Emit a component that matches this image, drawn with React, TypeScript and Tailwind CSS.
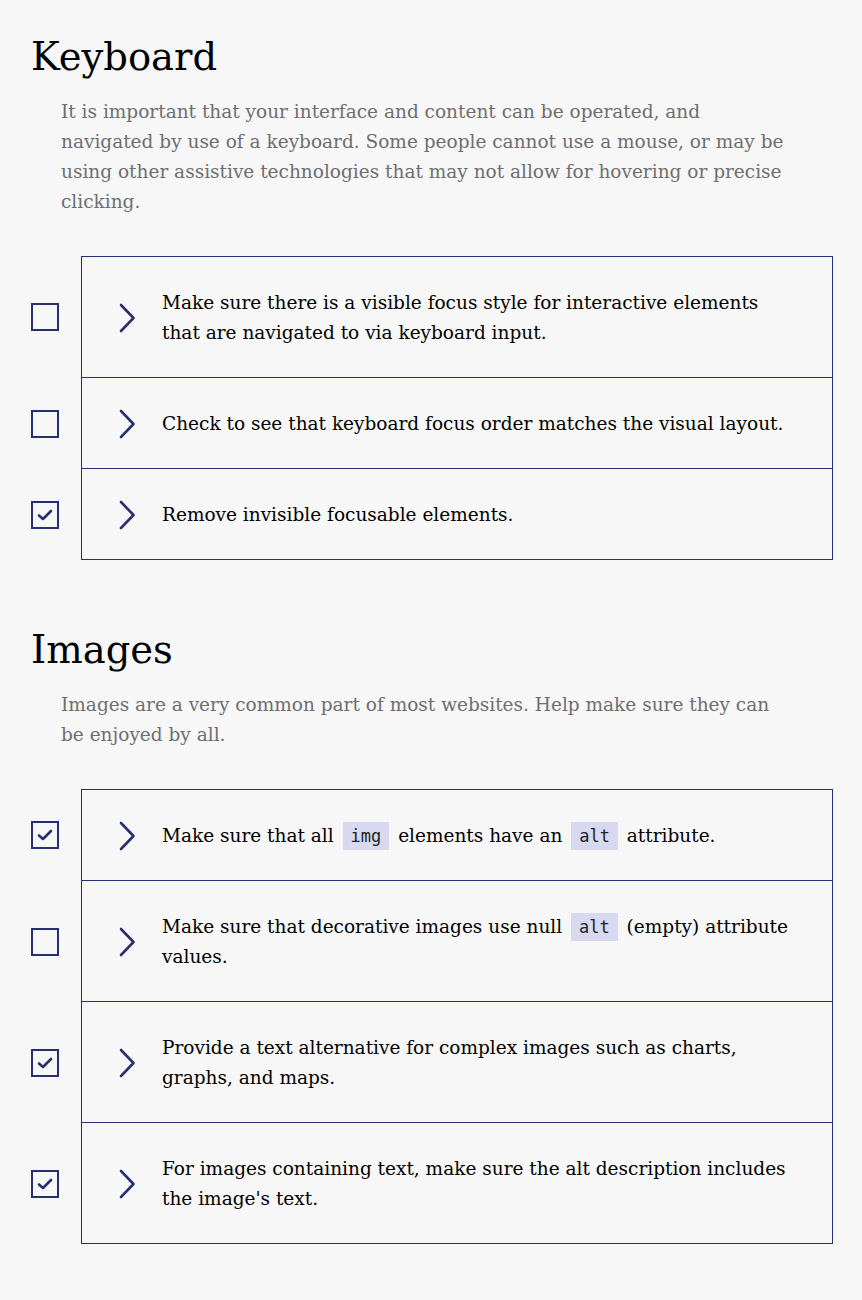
import React from "react";

type Item = { checked: boolean; content: React.ReactNode };

function Code({ children }: { children: React.ReactNode }) {
  return (
    <code className="mx-[3px] bg-[#d8d9f1] px-[8px] py-[4px] font-['DejaVu_Sans_Mono',monospace] text-[17px] text-[#222]">
      {children}
    </code>
  );
}

function Checkbox({ checked }: { checked: boolean }) {
  return (
    <div className="flex h-[28px] w-[28px] shrink-0 items-center justify-center border-2 border-[#27306e]">
      {checked && (
        <svg width="16" height="12" viewBox="0 0 16 12" fill="none">
          <path d="M2 6.5 L6 10 L14 2" stroke="#27306e" strokeWidth="2.6" strokeLinecap="round" strokeLinejoin="round" />
        </svg>
      )}
    </div>
  );
}

function Chevron() {
  return (
    <svg width="18" height="30" viewBox="0 0 18 30" fill="none" className="shrink-0">
      <path d="M3 2 L15.5 15 L3 28" stroke="#27306e" strokeWidth="2.6" strokeLinecap="round" strokeLinejoin="round" />
    </svg>
  );
}

function Section({ title, description, items }: { title: string; description: string; items: Item[] }) {
  return (
    <section className="mb-[66px]">
      <h2 className="text-[38.5px] leading-[48px] text-black">{title}</h2>
      <p className="mt-[16px] pl-[30px] pr-[40px] text-[18.5px] leading-[30px] text-[#6e6e6e]">{description}</p>
      <ul className="mt-[39px]">
        {items.map((item, i) => (
          <li key={i} className="flex items-center">
            <div className="flex w-[50px] shrink-0">
              <Checkbox checked={item.checked} />
            </div>
            <div
              className={`flex flex-1 items-center border-x border-[#27306e] border-b pt-[31px] pb-[29px] pl-[36px] pr-[30px] ${
                i === 0 ? "border-t" : ""
              }`}
            >
              <Chevron />
              <span className="ml-[26px] text-[18.5px] leading-[30px] text-black">{item.content}</span>
            </div>
          </li>
        ))}
      </ul>
    </section>
  );
}

export default function App() {
  return (
    <div className="min-h-[1300px] bg-[#f7f7f7] pl-[31px] pr-[29px] pt-[33px] font-['DejaVu_Serif',serif]">
      <Section
        title="Keyboard"
        description="It is important that your interface and content can be operated, and navigated by use of a keyboard. Some people cannot use a mouse, or may be using other assistive technologies that may not allow for hovering or precise clicking."
        items={[
          { checked: false, content: "Make sure there is a visible focus style for interactive elements that are navigated to via keyboard input." },
          { checked: false, content: "Check to see that keyboard focus order matches the visual layout." },
          { checked: true, content: "Remove invisible focusable elements." },
        ]}
      />
      <Section
        title="Images"
        description="Images are a very common part of most websites. Help make sure they can be enjoyed by all."
        items={[
          {
            checked: true,
            content: (
              <>
                Make sure that all <Code>img</Code> elements have an <Code>alt</Code> attribute.
              </>
            ),
          },
          {
            checked: false,
            content: (
              <>
                Make sure that decorative images use null <Code>alt</Code> (empty) attribute values.
              </>
            ),
          },
          { checked: true, content: "Provide a text alternative for complex images such as charts, graphs, and maps." },
          { checked: true, content: "For images containing text, make sure the alt description includes the image's text." },
        ]}
      />
    </div>
  );
}
